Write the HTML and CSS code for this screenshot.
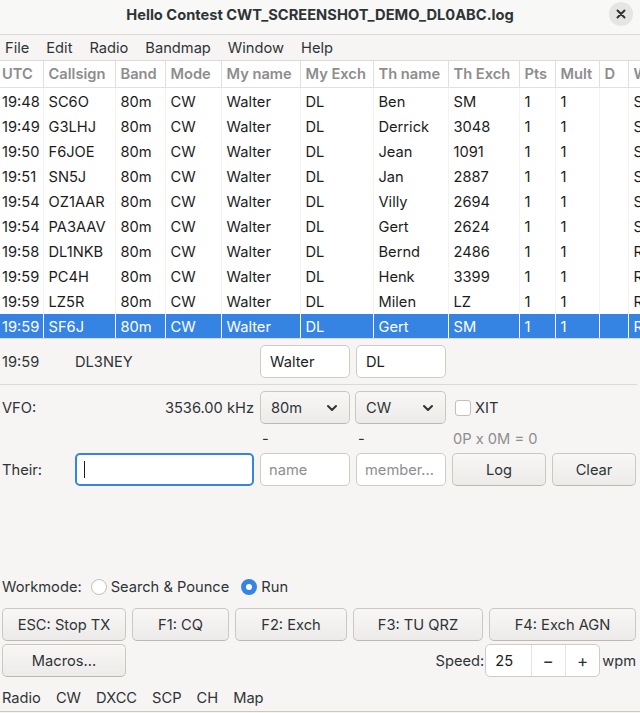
FILE: index.html
```html
<!DOCTYPE html>
<html lang="en">
<head>
<meta charset="utf-8">
<title>Hello Contest</title>
<link rel="stylesheet" href="styles.css">
</head>
<body>
<div class="window">
  <header class="titlebar">
    <span class="title">Hello Contest CWT_SCREENSHOT_DEMO_DL0ABC.log</span>
    <span class="close"><svg width="10" height="10" viewBox="0 0 10 10"><path d="M1.5 1.5 L8.5 8.5 M8.5 1.5 L1.5 8.5" stroke="#2e3436" stroke-width="2" stroke-linecap="round"/></svg></span>
  </header>
  <nav class="menubar">
    <span>File</span><span>Edit</span><span>Radio</span><span>Bandmap</span><span>Window</span><span>Help</span>
  </nav>
  <div class="log">
    <table class="qso">
      <colgroup>
        <col class="c-utc"><col class="c-call"><col class="c-band"><col class="c-mode"><col class="c-myname"><col class="c-myexch"><col class="c-thname"><col class="c-thexch"><col class="c-pts"><col class="c-mult"><col class="c-d"><col class="c-w">
      </colgroup>
      <thead>
        <tr><th>UTC</th><th>Callsign</th><th>Band</th><th>Mode</th><th>My name</th><th>My Exch</th><th>Th name</th><th>Th Exch</th><th>Pts</th><th>Mult</th><th>D</th><th>W</th></tr>
      </thead>
      <tbody>
        <tr><td>19:48</td><td>SC6O</td><td>80m</td><td>CW</td><td>Walter</td><td>DL</td><td>Ben</td><td>SM</td><td>1</td><td>1</td><td></td><td>S&amp;P</td></tr>
        <tr><td>19:49</td><td>G3LHJ</td><td>80m</td><td>CW</td><td>Walter</td><td>DL</td><td>Derrick</td><td>3048</td><td>1</td><td>1</td><td></td><td>S&amp;P</td></tr>
        <tr><td>19:50</td><td>F6JOE</td><td>80m</td><td>CW</td><td>Walter</td><td>DL</td><td>Jean</td><td>1091</td><td>1</td><td>1</td><td></td><td>S&amp;P</td></tr>
        <tr><td>19:51</td><td>SN5J</td><td>80m</td><td>CW</td><td>Walter</td><td>DL</td><td>Jan</td><td>2887</td><td>1</td><td>1</td><td></td><td>S&amp;P</td></tr>
        <tr><td>19:54</td><td>OZ1AAR</td><td>80m</td><td>CW</td><td>Walter</td><td>DL</td><td>Villy</td><td>2694</td><td>1</td><td>1</td><td></td><td>S&amp;P</td></tr>
        <tr><td>19:54</td><td>PA3AAV</td><td>80m</td><td>CW</td><td>Walter</td><td>DL</td><td>Gert</td><td>2624</td><td>1</td><td>1</td><td></td><td>S&amp;P</td></tr>
        <tr><td>19:58</td><td>DL1NKB</td><td>80m</td><td>CW</td><td>Walter</td><td>DL</td><td>Bernd</td><td>2486</td><td>1</td><td>1</td><td></td><td>Run</td></tr>
        <tr><td>19:59</td><td>PC4H</td><td>80m</td><td>CW</td><td>Walter</td><td>DL</td><td>Henk</td><td>3399</td><td>1</td><td>1</td><td></td><td>Run</td></tr>
        <tr><td>19:59</td><td>LZ5R</td><td>80m</td><td>CW</td><td>Walter</td><td>DL</td><td>Milen</td><td>LZ</td><td>1</td><td>1</td><td></td><td>Run</td></tr>
        <tr class="selected"><td>19:59</td><td>SF6J</td><td>80m</td><td>CW</td><td>Walter</td><td>DL</td><td>Gert</td><td>SM</td><td>1</td><td>1</td><td></td><td>Run</td></tr>
      </tbody>
    </table>
  </div>

  <main class="form">
    <div class="grid row-a">
      <span class="lbl">19:59</span>
      <span class="lbl">DL3NEY</span>
      <span class="entry">Walter</span>
      <span class="entry">DL</span>
    </div>
    <div class="sep"></div>
    <div class="grid row-vfo">
      <span class="lbl">VFO:</span>
      <span class="lbl freq">3536.00 kHz</span>
      <span class="dropdown">80m<svg class="chev" width="12" height="8" viewBox="0 0 12 8"><path d="M2 2 L6 6 L10 2" fill="none" stroke="#2e3436" stroke-width="2" stroke-linecap="round" stroke-linejoin="round"/></svg></span>
      <span class="dropdown">CW<svg class="chev" width="12" height="8" viewBox="0 0 12 8"><path d="M2 2 L6 6 L10 2" fill="none" stroke="#2e3436" stroke-width="2" stroke-linecap="round" stroke-linejoin="round"/></svg></span>
      <span class="check"><span class="box"></span>XIT</span>
    </div>
    <div class="grid row-info">
      <span></span>
      <span></span>
      <span class="dash">-</span>
      <span class="dash">-</span>
      <span class="score">0P x 0M = 0</span>
    </div>
    <div class="grid row-their">
      <span class="lbl">Their:</span>
      <span class="entry focused"><span class="caret"></span></span>
      <span class="entry placeholder">name</span>
      <span class="entry placeholder">member...</span>
      <span class="button">Log</span>
      <span class="button">Clear</span>
    </div>

    <div class="workmode">
      <span class="lbl">Workmode:</span>
      <span class="radio"><span class="dot"></span>Search &amp; Pounce</span>
      <span class="radio"><span class="dot on"></span>Run</span>
    </div>

    <div class="fkeys">
      <span class="button b-esc">ESC: Stop TX</span>
      <span class="button b-f1">F1: CQ</span>
      <span class="button b-f2">F2: Exch</span>
      <span class="button b-f3">F3: TU QRZ</span>
      <span class="button b-f4">F4: Exch AGN</span>
    </div>

    <div class="macros-row">
      <span class="button b-esc">Macros...</span>
      <span class="speed">
        <span class="lbl">Speed:</span>
        <span class="spin"><span class="val">25</span><span class="sbtn">−</span><span class="sbtn">+</span></span>
        <span class="lbl">wpm</span>
      </span>
    </div>

    <div class="tabs">
      <span>Radio</span><span>CW</span><span>DXCC</span><span>SCP</span><span>CH</span><span>Map</span>
    </div>
  </main>
</div>
</body>
</html>
```

FILE: styles.css
```css
* { box-sizing: border-box; }
html, body { margin: 0; padding: 0; }
body {
  width: 640px;
  height: 713px;
  overflow: hidden;
  font-family: "Inter", "Noto Sans", sans-serif;
  font-size: 14.67px;
  color: #2e3436;
  background: #f6f5f4;
}
.window { width: 640px; height: 713px; display: flex; flex-direction: column; overflow: hidden; }

.titlebar {
  height: 35px;
  flex: none;
  display: flex;
  align-items: center;
  justify-content: center;
  position: relative;
  background: #f8f8f7;
  border-bottom: 1px solid #dcdad7;
  padding-bottom: 5px;
}
.title { font-weight: 700; color: #2e3436; }
.close {
  position: absolute;
  right: 7px;
  top: 2px;
  width: 24px;
  height: 24px;
  border-radius: 50%;
  background: #e6e5e3;
  display: flex;
  align-items: center;
  justify-content: center;
}

.menubar {
  height: 25px;
  flex: none;
  display: flex;
  align-items: center;
  gap: 17px;
  padding-left: 5px;
  color: #2e3436;
}

.log {
  flex: none;
  height: 279px;
  background: #fff;
  overflow: hidden;
  border-top: 1px solid #dcdad7;
  border-bottom: 1px solid #dcdad7;
}
.qso { border-collapse: collapse; table-layout: fixed; width: 700px; }
.c-utc { width: 43px; } .c-call { width: 72px; } .c-band { width: 50px; } .c-mode { width: 56px; }
.c-myname { width: 79px; } .c-myexch { width: 73px; } .c-thname { width: 75px; } .c-thexch { width: 71px; }
.c-pts { width: 36px; } .c-mult { width: 44px; } .c-d { width: 29px; } .c-w { width: 72px; }
.qso th {
  height: 26px;
  padding: 0 0 0 5px;
  text-align: left;
  font-weight: 600;
  color: #8d8d8d;
  white-space: nowrap;
  overflow: hidden;
  border-left: 1px solid #e2e0de;
  border-bottom: 1px solid #e2e0de;
}
.qso td {
  height: 25px;
  padding: 0 0 0 5px;
  white-space: nowrap;
  overflow: hidden;
  color: #1c1c1c;
  border-left: 1px solid #f4f3f2;
}
.qso th:first-child, .qso td:first-child { padding-left: 2px; border-left: none; }
.qso tbody tr:first-child td { padding-top: 2px; height: 27px; }
.qso tr.selected td { background: #3584e4; color: #fff; border-left: 1px solid #fff; }
.qso tr.selected td:first-child { border-left: none; }

.form { flex: 1; display: flex; flex-direction: column; padding: 0 0 0 2px; }
.grid {
  display: grid;
  grid-template-columns: 67px 179px 90px 90px 94px 84px;
  column-gap: 6px;
  align-items: center;
}
.row-a { margin-top: 6px; height: 33px; }
.sep { height: 1px; background: #dcdad7; margin: 6px 3px 0 -2px; }
.row-vfo { margin-top: 6px; height: 33px; }
.row-info { height: 29px; }
.row-their { height: 33px; }

.lbl { color: #2e3436; white-space: nowrap; }
.freq { text-align: right; padding-right: 0; }

.entry {
  height: 33px;
  background: #fff;
  border: 1px solid #d0cbc6;
  border-radius: 5px;
  display: flex;
  align-items: center;
  padding-left: 9px;
  color: #1c1c1c;
  white-space: nowrap;
  overflow: hidden;
}
.entry.placeholder { color: #8e8e8e; padding-left: 8px; }
.entry.focused { border: 2px solid #3584e4; padding-left: 7px; }
.caret { width: 1px; height: 17px; background: #1c1c1c; }

.dropdown {
  height: 33px;
  border: 1px solid #cdc7c2;
  border-bottom-color: #bfb8b1;
  border-radius: 5px;
  background: linear-gradient(#f8f7f6, #edebe9);
  display: flex;
  align-items: center;
  justify-content: space-between;
  padding: 0 11px 0 10px;
}
.row-vfo .dropdown:nth-of-type(4) { margin-left: -1px; }

.check { display: flex; align-items: center; gap: 4px; padding-left: 3px; }
.box { width: 16px; height: 16px; border: 1px solid #c4bfba; border-radius: 3px; background: #fff; }

.dash { padding-left: 2px; color: #2e3436; }
.score { grid-column: 5 / span 2; color: #8e8e8e; padding-left: 1px; }

.button {
  height: 33px;
  border: 1px solid #cdc7c2;
  border-bottom-color: #bfb8b1;
  border-radius: 5px;
  background: linear-gradient(#f8f7f6, #edebe9);
  display: flex;
  align-items: center;
  justify-content: center;
  color: #2e3436;
  white-space: nowrap;
}

.workmode { margin-top: 90px; height: 21px; display: flex; align-items: center; }
.radio { display: flex; align-items: center; gap: 4px; margin-left: 9px; }
.radio + .radio { margin-left: 12px; }
.dot { width: 16px; height: 16px; border-radius: 50%; border: 1px solid #c4bfba; background: #fff; }
.dot.on { border: 5px solid #3584e4; background: #fff; }

.fkeys { margin-top: 11px; display: flex; gap: 6px; }
.b-esc { width: 124px; }
.b-f1 { width: 97px; }
.b-f2 { width: 112px; }
.b-f3 { width: 130px; }
.b-f4 { width: 147px; }

.macros-row { margin-top: 3px; display: flex; justify-content: space-between; align-items: center; padding-right: 4px; }
.speed { display: flex; align-items: center; gap: 2px; }
.spin {
  display: flex;
  height: 33px;
  width: 115px;
  background: #fff;
  border: 1px solid #d0cbc6;
  border-radius: 5px;
  overflow: hidden;
  margin-left: -1px;
}
.val { width: 45px; padding-left: 9px; display: flex; align-items: center; color: #1c1c1c; }
.sbtn { width: 35px; display: flex; align-items: center; justify-content: center; border-left: 1px solid #e5e2df; font-size: 17px; color: #2e3436; }

.tabs {
  margin-top: 10px;
  height: 25px;
  display: flex;
  gap: 15px;
  align-items: center;
  margin-left: -2px;
  padding-left: 2px;
  border-bottom: 1px solid #cdc7c2;
  padding-bottom: 3px;
}
```
